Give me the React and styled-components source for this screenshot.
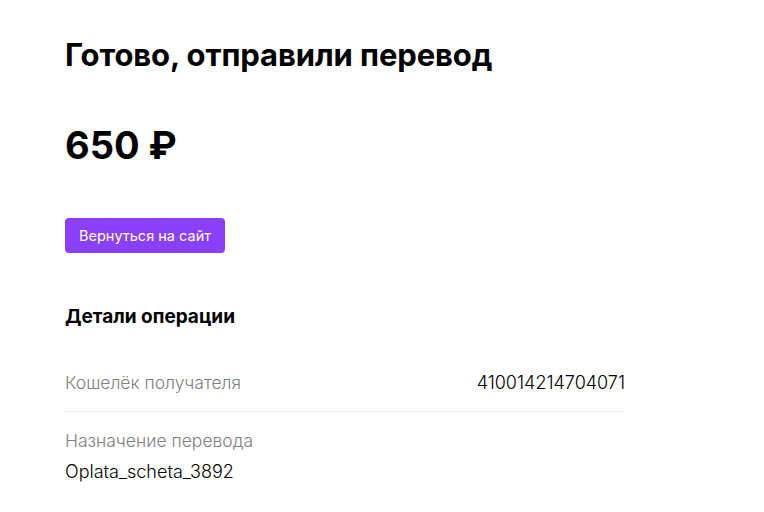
import React from "react";
import styled, { createGlobalStyle } from "styled-components";

const Global = createGlobalStyle`
  html, body { margin: 0; padding: 0; background: #fff; }
  body { font-family: "Inter", "Roboto", sans-serif; color: #000; }
`;

const Page = styled.main`
  width: 560px;
  padding: 36px 0 0 65px;
  display: flex;
  flex-direction: column;
`;

const Title = styled.h1`
  margin: 0;
  font-size: 31px;
  line-height: 38px;
  font-weight: 700;
  letter-spacing: -0.1px;
`;

const Amount = styled.div`
  margin-top: 48px;
  font-size: 38px;
  line-height: 46px;
  font-weight: 700;
`;

const Button = styled.button`
  margin-top: 50px;
  align-self: flex-start;
  height: 35px;
  width: 160px;
  padding: 0;
  border: 0;
  border-radius: 4px;
  background: #8a3ffc;
  color: #fff;
  font-family: "Inter", "Roboto", sans-serif;
  font-size: 14.5px;
  cursor: pointer;
`;

const SectionTitle = styled.h2`
  margin: 52px 0 0;
  font-size: 19px;
  line-height: 24px;
  font-weight: 700;
`;

const Row = styled.div`
  display: flex;
  flex-direction: ${(p) => (p.$stacked ? "column" : "row")};
  justify-content: space-between;
  align-items: ${(p) => (p.$stacked ? "flex-start" : "baseline")};
  gap: ${(p) => (p.$stacked ? "7px" : "0")};
  padding: ${(p) => (p.$stacked ? "17px 0 0" : "42px 0 16px")};
  border-bottom: ${(p) => (p.$divider ? "1px solid #e8e8e8" : "none")};
  font-size: 17.5px;
  line-height: 24px;
  font-weight: 300;
`;

const Label = styled.span`
  color: #808080;
`;

const Value = styled.span`
  color: #000;
  font-size: 18px;
`;

export default function App() {
  return (
    <>
      <Global />
      <Page>
        <Title>Готово, отправили перевод</Title>
        <Amount>650 ₽</Amount>
        <Button>Вернуться на сайт</Button>
        <SectionTitle>Детали операции</SectionTitle>
        <Row $divider>
          <Label>Кошелёк получателя</Label>
          <Value>410014214704071</Value>
        </Row>
        <Row $stacked>
          <Label>Назначение перевода</Label>
          <Value>Oplata_scheta_3892</Value>
        </Row>
      </Page>
    </>
  );
}
